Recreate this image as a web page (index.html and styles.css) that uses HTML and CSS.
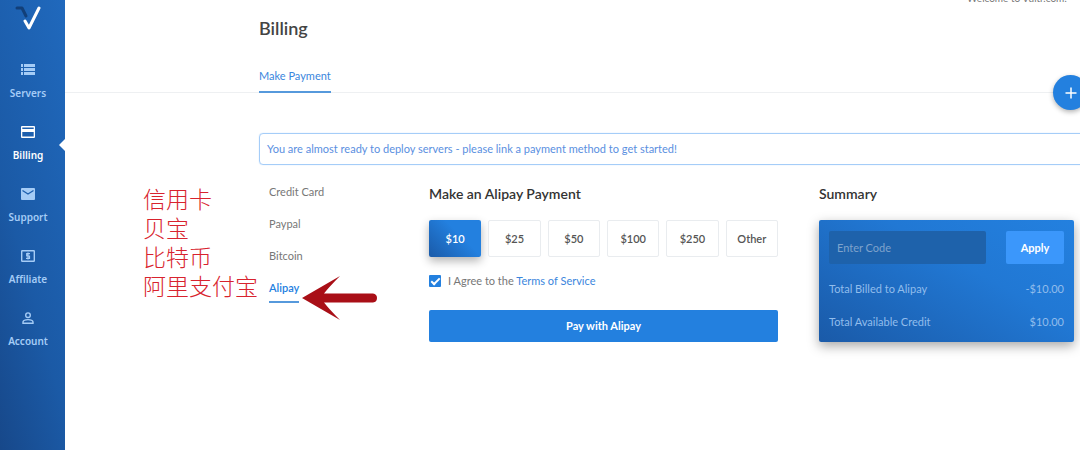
FILE: index.html
```html
<!DOCTYPE html>
<html lang="en-US">
<head>
	<meta charset="utf-8">
	<meta name="viewport" content="width=device-width, initial-scale=1.0">
	<title>Billing</title>
	<link rel="stylesheet" href="styles.css">
</head>
<body>
	<aside class="sidebar">
		<a href="#" class="logo" aria-label="Home">
			<svg width="26" height="26" viewBox="0 0 26 26" fill="none" stroke-width="3" stroke-linecap="round" stroke-linejoin="round">
				<path d="M2 3H7L11 11" stroke="#123f78"/>
				<path d="M10 16L14 23L24 3" stroke="#fff"/>
			</svg>
		</a>
		<nav class="nav">
			<a href="#" class="nav-item">
				<svg width="14" height="12" viewBox="0 0 14 12" fill="currentColor"><path d="M0 0h2v3H0zM3 0h11v3H3zM0 4h2v3H0zM3 4h11v3H3zM0 8h2v3H0zM3 8h11v3H3z"/></svg>
				<span>Servers</span>
			</a>
			<a href="#" class="nav-item active">
				<svg width="14" height="12" viewBox="0 0 14 12" fill="currentColor"><path fill-rule="evenodd" d="M1 0h12q1 0 1 1v10q0 1-1 1H1q-1 0-1-1V1q0-1 1-1zM1.300 1.500v1.500h11.400V1.500zM1.300 6v4.600h11.400V6z"/></svg>
				<span>Billing</span>
			</a>
			<a href="#" class="nav-item">
				<svg width="14" height="12" viewBox="0 0 14 12"><rect width="14" height="12" rx="1" fill="currentColor"/><path d="M1.500 2.500L7 6l5.500-3.500" fill="none" stroke="#1d5fae" stroke-width="1.300"/></svg>
				<span>Support</span>
			</a>
			<a href="#" class="nav-item">
				<svg width="14" height="12" viewBox="0 0 14 12" fill="none" stroke="currentColor"><rect x=".7" y=".7" width="12.600" height="10.600" rx=".5" stroke-width="1.400"/><path d="M9 3.700H5.700V6h2.800v2.300H5M7 2.500v7" stroke-width="1.200"/></svg>
				<span>Affiliate</span>
			</a>
			<a href="#" class="nav-item">
				<svg width="14" height="12" viewBox="0 0 14 12" fill="none" stroke="currentColor" stroke-width="1.400"><circle cx="7" cy="3.200" r="2.300"/><path d="M2 11.300V9.800Q2.500 7.600 7 7.600T12 9.800v1.500z"/></svg>
				<span>Account</span>
			</a>
		</nav>
	</aside>

	<main class="main">
		<header class="header">
			<p class="welcome">Welcome to Vultr.com!</p>
			<h1>Billing</h1>
			<div class="tabs">
				<a href="#" class="tab">Make Payment</a>
			</div>
			<button type="button" class="add" aria-label="Add">
				<svg width="12" height="12" viewBox="0 0 12 12" stroke="#fff" stroke-width="1.500"><path d="M6 .5v11M.5 6h11"/></svg>
			</button>
		</header>

		<div class="content">
			<div class="alert">You are almost ready to deploy servers - please link a payment method to get started!</div>

			<div class="columns">
				<nav class="methods">
					<a href="#">Credit Card</a>
					<a href="#">Paypal</a>
					<a href="#">Bitcoin</a>
					<a href="#" class="selected">Alipay</a>
					<div class="note" lang="zh-CN">信用卡<br>贝宝<br>比特币<br>阿里支付宝</div>
					<svg class="arrow" width="76" height="44" viewBox="0 0 76 44" fill="#a90f17"><path d="M0 22L38 0Q27 11 22 17.500H71Q75 18 75 22T71 26.500H22Q27 33 38 44Z"/></svg>
				</nav>

				<form class="payment">
					<h2>Make an Alipay Payment</h2>
					<div class="amounts">
						<button type="button" class="amount picked">$10</button>
						<button type="button" class="amount">$25</button>
						<button type="button" class="amount">$50</button>
						<button type="button" class="amount">$100</button>
						<button type="button" class="amount">$250</button>
						<button type="button" class="amount">Other</button>
					</div>
					<div class="agree">
						<input type="checkbox" id="agree" checked>
						<label for="agree">I Agree to the <a href="#">Terms of Service</a></label>
					</div>
					<button type="submit" class="pay">Pay with Alipay</button>
				</form>

				<section class="summary">
					<h2>Summary</h2>
					<div class="card">
						<form class="coupon">
							<input type="text" placeholder="Enter Code" aria-label="Enter Code">
							<button type="button">Apply</button>
						</form>
						<div class="total"><span>Total Billed to Alipay</span><span>-$10.00</span></div>
						<div class="total"><span>Total Available Credit</span><span>$10.00</span></div>
					</div>
				</section>
			</div>
		</div>
	</main>
</body>
</html>
```
FILE: styles.css
```css
* {
	box-sizing: border-box;
}
body {
	margin: 0;
	min-height: 100vh;
	display: flex;
	overflow: hidden;
	font-family: Lato, "Noto Sans CJK SC", sans-serif;
	font-size: 11px;
	line-height: 16px;
	color: #777;
	background: #fff;
}
a {
	color: #3a86dd;
	text-decoration: none;
}
button, input {
	font: inherit;
	border: 0;
	margin: 0;
}
button {
	cursor: pointer;
}
h1, h2, p {
	margin: 0;
}

/* sidebar */
.sidebar {
	flex: none;
	width: 65px;
	padding: 5px 9px 0 0;
	background: linear-gradient(75deg, #17488a 0%, #1b5aa6 40%, #2069bd 100%);
}
.logo {
	display: flex;
	justify-content: center;
	height: 59px;
}
.nav-item {
	position: relative;
	display: flex;
	flex-direction: column;
	align-items: center;
	gap: 9px;
	height: 62px;
	font-family: "Noto Sans", sans-serif;
	font-size: 10px;
	font-weight: 600;
	color: #a5ccf6;
}
.nav-item svg {
	flex: none;
}
.nav-item.active {
	color: #fff;
}
.nav-item.active::after {
	content: "";
	position: absolute;
	top: 13px;
	right: -9px;
	border: 6px solid transparent;
	border-left-width: 0;
	border-right-color: #fff;
}

/* header */
.main {
	flex: 1;
	min-width: 0;
}
.header {
	position: relative;
	height: 93px;
	padding-left: 194px;
	border-bottom: 1px solid #eef0f2;
}
.welcome {
	position: absolute;
	top: -10px;
	right: 13px;
	font-size: 10px;
}
h1 {
	padding-top: 16px;
	font-size: 18px;
	line-height: 24px;
	font-weight: 600;
	color: #444;
}
.tabs {
	display: flex;
	padding-top: 28px;
}
.tab {
	height: 25px;
	border-bottom: 2px solid #5699dc;
}
.add {
	position: absolute;
	top: 75px;
	right: -8px;
	width: 35px;
	height: 35px;
	padding: 0;
	display: flex;
	align-items: center;
	justify-content: center;
	border-radius: 50%;
	background: #2380df;
	box-shadow: 0 2px 5px rgba(0,0,0,0.3);
}

/* content */
.content {
	padding: 40px 6px 0 194px;
}
.alert {
	margin-right: -12px;
	padding: 7px;
	border: 1px solid #a5cdf8;
	border-radius: 4px;
	box-shadow: 0 0 1px #a5cdf8;
	color: #5a8fdf;
}
.columns {
	display: grid;
	grid-template-columns: 129px minmax(0, 349fr) minmax(0, 255fr);
	column-gap: 41px;
	padding-top: 19px;
}
h2 {
	font-size: 14px;
	line-height: 20px;
	font-weight: 600;
	color: #333;
}
.methods {
	position: relative;
	display: flex;
	flex-direction: column;
	align-items: flex-start;
	gap: 16px;
	padding-left: 10px;
}
.methods a {
	color: #777;
}
.methods .selected {
	height: 23px;
	border-bottom: 2px solid #5699dc;
	font-weight: 600;
	color: #2380df;
}
.note {
	position: absolute;
	top: 0;
	left: -116px;
	font-family: "Noto Sans CJK SC", sans-serif;
	font-size: 23px;
	line-height: 29px;
	font-weight: 300;
	white-space: nowrap;
	color: #d8232e;
}
.arrow {
	position: absolute;
	top: 92px;
	left: 43px;
}

/* payment form */
.amounts {
	display: grid;
	grid-template-columns: repeat(6, 1fr);
	gap: 7px;
	padding-top: 16px;
}
.amount {
	height: 37px;
	padding: 0;
	border: 1px solid #e9ecef;
	border-radius: 2px;
	background: #fff;
	font-weight: 600;
	color: #555;
}
.amount.picked {
	border: 0;
	background: linear-gradient(45deg, #1a5aa8, #2380df 60%);
	box-shadow: 0 4px 10px rgba(0,0,0,0.3);
	color: #fff;
}
.agree {
	display: flex;
	align-items: center;
	gap: 7px;
	padding: 16px 0 21px;
}
.agree input {
	appearance: none;
	width: 12px;
	height: 12px;
	border-radius: 1px;
	background: #2380df;
	display: flex;
	align-items: center;
	justify-content: center;
}
.agree input:checked::before {
	content: "";
	box-sizing: border-box;
	width: 5px;
	height: 9px;
	margin-bottom: 2px;
	border: solid #fff;
	border-width: 0 2px 2px 0;
	transform: rotate(45deg);
}
.pay {
	width: 100%;
	height: 32px;
	border-radius: 2px;
	background: #2380df;
	font-weight: 700;
	color: #fff;
}

/* summary */
.card {
	margin-top: 16px;
	padding: 11px 10px 12px;
	border-radius: 2px;
	background: linear-gradient(30deg, #1a5aa8 0%, #2178d4 60%, #2380df 100%);
	box-shadow: 0 4px 12px rgba(0,0,0,0.35);
	color: #91bdec;
}
.coupon {
	display: flex;
	justify-content: space-between;
	gap: 20px;
	margin-bottom: 17px;
}
.coupon input {
	flex: 1;
	min-width: 0;
	height: 33px;
	padding: 0 8px;
	border-radius: 2px;
	background: #1e62ab;
	color: #fff;
}
.coupon input::placeholder {
	color: #7fa3cc;
}
.coupon button {
	width: 58px;
	height: 33px;
	border-radius: 2px;
	background: #3b97fb;
	font-weight: 700;
	color: #fff;
}
.total {
	display: flex;
	justify-content: space-between;
}
.total + .total {
	margin-top: 17px;
}
```
